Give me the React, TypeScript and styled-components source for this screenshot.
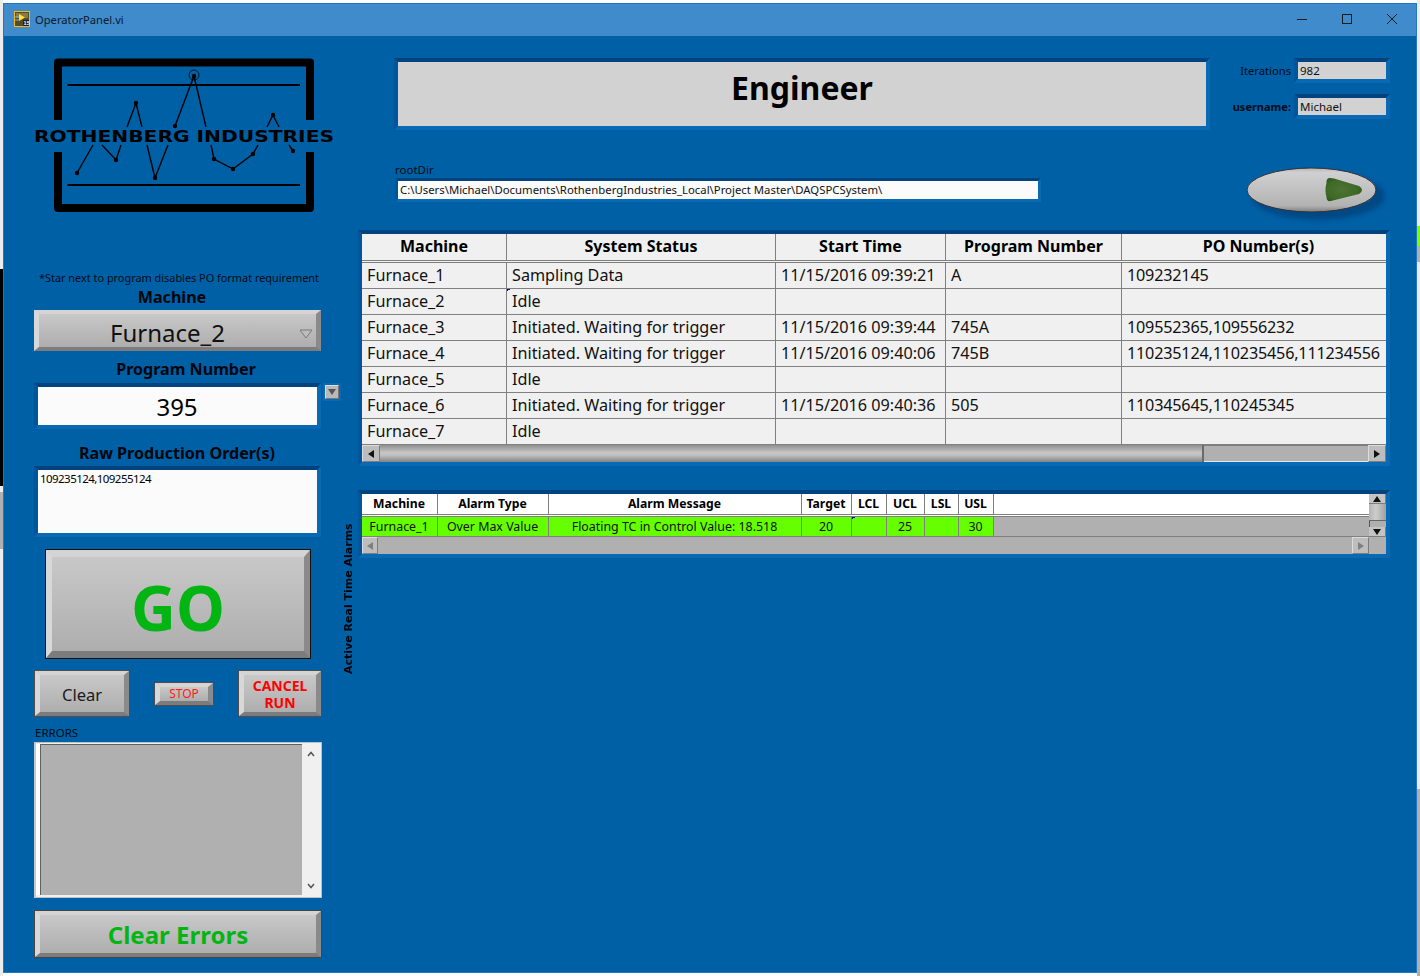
import React, { FunctionComponent } from "react";
import styled, { createGlobalStyle } from "styled-components";

const uiFont = `"Noto Sans", "Open Sans", "Liberation Sans", sans-serif`;

const GlobalStyle = createGlobalStyle`
  html, body {
    margin: 0;
    padding: 0;
    background: #ffffff;
  }
  body {
    font-family: ${uiFont};
    color: #000000;
  }
  * {
    box-sizing: border-box;
  }
`;

// the 3px slivers of other windows that show behind the panel
const Page = styled.div`
  width: 1420px;
  height: 976px;
  padding: 3px 0 0 3px;
  overflow: hidden;
  background:
    linear-gradient(#000000, #000000) 0 269px / 3px 217px no-repeat,
    linear-gradient(#b0b0b0, #b0b0b0) 0 492px / 3px 57px no-repeat,
    linear-gradient(#7cff00, #7cff00) 1417px 226px / 3px 20px no-repeat,
    linear-gradient(#b0b0b0, #b0b0b0) 1417px 246px / 3px 16px no-repeat,
    linear-gradient(#b0b0b0, #b0b0b0) 1417px 789px / 3px 187px no-repeat,
    linear-gradient(90deg, #ececec 3px, transparent 3px, transparent 1417px, #ececec 1417px) 0 0 / 1420px 976px no-repeat,
    #ffffff;
`;

const Window = styled.div`
  width: 1414px;
  height: 970px;
  display: flex;
  flex-direction: column;
  background: #0060a6;
  border: 1px solid #1f77c8;
`;

const TitleBar = styled.div`
  height: 32px;
  flex: none;
  display: flex;
  align-items: center;
  padding: 0 2px 2px 10px;
  background: #3f8bcb;
`;

const TitleText = styled.span`
  margin-left: 5px;
  font-size: 11.2px;
  color: #0a1a2c;
  flex: 1;
`;

const WinButton = styled.div`
  width: 45px;
  height: 30px;
  display: flex;
  align-items: center;
  justify-content: center;
`;

const Content = styled.div`
  flex: 1;
  display: flex;
  min-height: 0;
`;

const LeftColumn = styled.div`
  width: 338px;
  flex: none;
  padding-left: 30px;
  display: flex;
  flex-direction: column;
`;

const RightColumn = styled.div`
  flex: 1;
  display: flex;
  flex-direction: column;
  padding-top: 22px;
`;

const LogoSvg = styled.svg`
  display: block;
  margin: 19px 0 0 -4px;
  flex: none;
`;

const Notice = styled.div`
  margin-top: 56px;
  width: 290px;
  height: 14px;
  line-height: 14px;
  font-size: 10.9px;
  text-align: center;
  white-space: nowrap;
  color: #000c18;
`;

const FieldLabel = styled.div<{ $top: number; $wide: number }>`
  margin-top: ${props => props.$top}px;
  height: 18px;
  line-height: 18px;
  width: ${props => props.$wide}px;
  font-size: 16.1px;
  font-weight: 700;
  text-align: center;
  white-space: nowrap;
  color: #00060c;
`;

const Bevel = styled.button`
  display: flex;
  align-items: center;
  justify-content: center;
  padding: 0;
  font-family: ${uiFont};
  background: linear-gradient(#c8c8c8, #aeaeae);
  border-style: solid;
  border-width: 4px 5px 4px 5px;
  border-color: #d4d4d4 #8a8a8a #7c7c7c #d8d8d8;
`;

const Dropdown = styled(Bevel)`
  position: relative;
  margin-top: 4px;
  width: 287px;
  height: 41px;
  font-size: 24px;
  color: #111111;
  padding: 3px 20px 0 0;
`;

const DropArrow = styled.svg`
  position: absolute;
  right: 3px;
  top: 15px;
`;

const InputRow = styled.div`
  margin-top: 5px;
  display: flex;
  align-items: flex-start;
  gap: 2px;
`;

const Sunken = styled.div`
  border-style: solid;
  border-width: 4px;
  border-color: #00437f #0a69b3 #0a69b3 #00569c;
`;

const ProgramBox = styled(Sunken)`
  width: 287px;
  height: 46px;
  background: #fbfbfb;
  background-clip: padding-box;
  display: flex;
  align-items: center;
  justify-content: center;
  padding-right: 1px;
  font-size: 24px;
  color: #000000;
`;

const SpinFrame = styled.div`
  width: 18px;
  height: 18px;
  padding: 2px;
  background: #0a69b3;
`;

const SpinButton = styled.div`
  width: 14px;
  height: 14px;
  display: flex;
  align-items: center;
  justify-content: center;
  background: #b9b9b9;
  border: 1px solid #dddddd;
  border-right-color: #777777;
  border-bottom-color: #777777;
`;

const OrdersBox = styled(Sunken)`
  margin-top: 4px;
  width: 287px;
  height: 71px;
  padding: 1px 2px;
  background: #fbfbfb;
  background-clip: padding-box;
  font-size: 11.5px;
  letter-spacing: -0.55px;
  line-height: 15px;
`;

const GoButton = styled(Bevel)`
  margin: 13px 0 0 12px;
  width: 264px;
  height: 108px;
  padding-top: 5px;
  border-width: 7px 6px 7px 6px;
  box-shadow: 0 0 0 1px #111111;
  font-size: 62px;
  font-weight: 700;
  color: #02b512;
`;

const ActionRow = styled.div`
  margin-top: 12px;
  width: 288px;
  height: 47px;
  padding: 0 1px;
  display: flex;
  align-items: center;
  justify-content: space-between;
`;

const SmallButton = styled(Bevel)<{ $wide: number; $tall: number; $color: string; $size: number; $bold?: boolean }>`
  width: ${props => props.$wide}px;
  height: ${props => props.$tall}px;
  color: ${props => props.$color};
  font-size: ${props => props.$size}px;
  font-weight: ${props => (props.$bold ? 700 : 400)};
  line-height: 17px;
  text-align: center;
  box-shadow: 0 0 0 1px #4d4d4d;
`;

const ClearButton = styled(SmallButton)`
  padding-top: 2px;
`;

const ErrorsLabel = styled.div`
  margin-top: 9px;
  padding-left: 1px;
  height: 14px;
  line-height: 14px;
  font-size: 11.5px;
  color: #000c18;
`;

const ErrorsBox = styled.div`
  margin-top: 2px;
  width: 288px;
  height: 156px;
  display: flex;
  background: #f0f0f0;
  border: 1px solid #b8c4cc;
  border-left-width: 2px;
  border-left-color: #c4ccd2;
  padding: 1px 1px 2px 0;
`;

const ErrorsStrip = styled.div`
  width: 4px;
  flex: none;
  background: #ffffff;
`;

const ErrorsText = styled.div`
  flex: 1;
  background: #b0b0b0;
  border-top: 1px solid #606060;
  border-left: 1px solid #606060;
`;

const ErrorsScroll = styled.div`
  width: 18px;
  display: flex;
  flex-direction: column;
  justify-content: space-between;
  align-items: center;
  padding: 7px 0 6px;
`;

const ClearErrors = styled(Bevel)`
  margin: 13px 0 0 1px;
  width: 286px;
  height: 46px;
  padding-top: 1px;
  box-shadow: 0 0 0 1px #444444;
  font-size: 24px;
  font-weight: 700;
  color: #02b512;
`;

const HeaderRow = styled.div`
  height: 72px;
  display: flex;
  padding-left: 52px;
  flex: none;
`;

const RoleBanner = styled(Sunken)`
  width: 816px;
  height: 72px;
  padding-bottom: 14px;
  background: #d2d2d2;
  background-clip: padding-box;
  display: flex;
  align-items: center;
  justify-content: center;
  font-size: 32px;
  font-weight: 700;
`;

const StatusBlock = styled.div`
  width: 180px;
  padding-top: 2px;
  display: flex;
  flex-direction: column;
  gap: 15px;
`;

const StatusRow = styled.div`
  display: flex;
  align-items: center;
  justify-content: flex-end;
  gap: 3px;
  height: 21px;
`;

const StatusLabel = styled.span<{ $bold?: boolean }>`
  font-size: ${props => (props.$bold ? 11 : 11.2)}px;
  font-weight: ${props => (props.$bold ? 700 : 400)};
  color: #000c18;
`;

const StatusValue = styled(Sunken)`
  width: 96px;
  height: 25px;
  margin: -2px 0;
  padding-left: 2px;
  background: #d2d2d2;
  background-clip: padding-box;
  font-size: 11.5px;
  line-height: 17px;
  color: #111111;
`;

const PathRow = styled.div`
  height: 100px;
  flex: none;
  display: flex;
  padding-left: 53px;
`;

const PathBlock = styled.div`
  width: 646px;
  padding-top: 33px;
`;

const PathLabel = styled.div`
  height: 14px;
  margin-bottom: 1px;
  line-height: 14px;
  font-size: 11.5px;
  color: #000c18;
`;

const PathValue = styled.div`
  height: 24px;
  padding: 0 2px;
  border-style: solid;
  border-width: 3px;
  border-color: #00437f #0a69b3 #0a69b3 #00569c;
  background: #fbfbfb;
  background-clip: padding-box;
  font-size: 11.35px;
  line-height: 17px;
  white-space: nowrap;
  color: #111111;
`;

const GaugeSvg = styled.svg`
  display: block;
  margin: 36px 0 0 205px;
`;

const TableFrame = styled(Sunken)`
  margin-left: 16px;
  width: 1032px;
  height: 236px;
  background: #f0f0f0;
  background-clip: padding-box;
  display: flex;
  flex-direction: column;
`;

const mainColumns = "145px 269px 170px 176px 1fr";

const MainHead = styled.div`
  height: 29px;
  display: grid;
  grid-template-columns: ${mainColumns};
  border-bottom: 3px double #808080;
`;

const MainHeadCell = styled.div`
  border-right: 1px solid #808080;
  text-align: center;
  font-size: 16px;
  font-weight: 700;
  line-height: 25px;
  color: #000000;

  &:last-child {
    border-right: 0;
    padding-left: 9px;
  }
`;

const MainRow = styled.div`
  height: 26px;
  flex: none;
  display: grid;
  grid-template-columns: ${mainColumns};
  border-bottom: 1px solid #808080;
`;

const MainCell = styled.div`
  position: relative;
  padding-left: 5px;
  border-right: 1px solid #808080;
  font-size: 16.2px;
  line-height: 24px;
  white-space: nowrap;
  color: #111111;

  &:last-child {
    border-right: 0;
    padding-left: 5px;
    letter-spacing: -0.2px;
  }
`;

const CellMark = styled.i`
  position: absolute;
  left: 0;
  top: 0;
  width: 3px;
  height: 2px;
  border-top: 1px solid #0000d0;
  border-left: 1px solid #0000d0;
`;

const ScrollBar = styled.div`
  flex: 1;
  display: flex;
  background: #b0b0b0;
`;

const ArrowButton = styled.div<{ $w: number }>`
  width: ${props => props.$w}px;
  flex: none;
  display: flex;
  align-items: center;
  justify-content: center;
  background: #bdbdbd;
  border: 1px solid #dcdcdc;
  border-right-color: #7d7d7d;
  border-bottom-color: #7d7d7d;
`;

const ScrollThumb = styled.div`
  width: 824px;
  background: linear-gradient(#8f8f8f, #c6c6c6 45%, #c0c0c0 60%, #848484);
  border-right: 2px solid #6a6a6a;
`;

const ScrollTrack = styled.div`
  flex: 1;
  border-top: 1px solid #7d7d7d;
  border-bottom: 1px solid #e6e6e6;
`;

const AlarmSection = styled.div`
  margin-top: 24px;
  display: flex;
  align-items: flex-start;
`;

const AlarmTitle = styled.div`
  width: 14px;
  height: 150px;
  margin-top: 34px;
  margin-right: 2px;
  writing-mode: vertical-rl;
  transform: rotate(180deg);
  font-family: "DejaVu Sans", sans-serif;
  font-size: 11px;
  font-weight: 700;
  line-height: 14px;
  white-space: nowrap;
  text-align: left;
  color: #00060c;
`;

const AlarmFrame = styled(Sunken)`
  width: 1032px;
  height: 68px;
  background: #b0b0b0;
  background-clip: padding-box;
  display: flex;
  flex-direction: column;
`;

const AlarmBody = styled.div`
  height: 43px;
  flex: none;
  display: flex;
`;

const AlarmGrid = styled.div`
  flex: 1;
  display: flex;
  flex-direction: column;
`;

const alarmColumns = "76px 111px 253px 50px 35px 38px 34px 35px 1fr";

const AlarmHead = styled.div`
  height: 23px;
  flex: none;
  display: grid;
  grid-template-columns: ${alarmColumns};
  background: #ffffff;
  border-bottom: 3px double #808080;
`;

const AlarmHeadCell = styled.div`
  border-right: 1px solid #808080;
  padding-right: 1px;
  text-align: center;
  font-size: 12.2px;
  font-weight: 700;
  line-height: 19px;
  white-space: nowrap;
  color: #000000;

  &:last-child {
    border-right: 0;
  }
`;

const AlarmRow = styled.div`
  height: 20px;
  flex: none;
  display: grid;
  grid-template-columns: ${alarmColumns};
  border-bottom: 1px solid #808080;
`;

const AlarmCell = styled.div<{ $lit?: boolean }>`
  position: relative;
  border-right: 1px solid #808080;
  background: ${props => (props.$lit ? "#66ff00" : "#b0b0b0")};
  padding-right: 1px;
  text-align: center;
  font-size: 12.4px;
  line-height: 19px;
  white-space: nowrap;
  color: #111111;

  &:last-child {
    border-right: 0;
  }
`;

const VerticalBar = styled.div`
  width: 17px;
  flex: none;
  display: flex;
  flex-direction: column;
`;

const VerticalButton = styled.div`
  height: 10px;
  display: flex;
  align-items: center;
  justify-content: center;
  background: #c4c4c4;
  border-bottom: 1px solid #7d7d7d;
  border-right: 1px solid #7d7d7d;
`;

const VerticalThumb = styled.div`
  height: 17px;
  background: linear-gradient(90deg, #b4b4b4, #cdcdcd 40%, #a0a0a0);
  border-bottom: 1px solid #666666;
`;

const VerticalGap = styled.div`
  flex: 1;
  border-left: 1px solid #555555;
`;

const BottomBar = styled.div`
  flex: 1;
  display: flex;
  background: #b0b0b0;
  padding-right: 17px;
`;

const Spacer = styled.div`
  flex: 1;
`;

const Arrow: FunctionComponent<{ dir: "left" | "right" | "up" | "down"; color?: string }> = ({
  dir,
  color = "#111111",
}) => {
  const points = {
    left: "1,4 7,0 7,8",
    right: "7,4 1,0 1,8",
    up: "4,1 0,7 8,7",
    down: "4,7 0,1 8,1",
  }[dir];
  return (
    <svg width="8" height="8" viewBox="0 0 8 8">
      <polygon points={points} fill={color} />
    </svg>
  );
};

const Logo: FunctionComponent = () => {
  const traces = [
    "77,173 93,145",
    "102,145 116,160 121,145",
    "127,127 136,103 142,127",
    "147,145 155,178 168,145",
    "175,126 194,76 206,127",
    "211,145 214,159 233,169 253,154 258,145",
    "267,127 273,115 279,127",
    "289,145 293,151",
  ];
  const dots = [
    [77, 173],
    [116, 160],
    [136, 103],
    [155, 178],
    [175, 126],
    [194, 76],
    [214, 159],
    [233, 169],
    [253, 154],
    [273, 115],
    [293, 151],
  ];
  return (
    <LogoSvg width="310" height="160" viewBox="30 55 310 160">
      <path
        d="M58 120V62.5H310V120M58 152V208H310V152"
        fill="none"
        stroke="#000"
        strokeWidth="8"
        strokeLinejoin="round"
      />
      <path d="M67.5 85H300M67.5 185H300" stroke="#000" strokeWidth="2" />
      {traces.map(points => (
        <polyline key={points} points={points} fill="none" stroke="#000" strokeWidth="1.4" />
      ))}
      {dots.map(([x, y]) => (
        <circle key={`${x}-${y}`} cx={x} cy={y} r="2.2" fill="#000" />
      ))}
      <circle cx="194" cy="75" r="5" fill="none" stroke="#000" strokeWidth="0.8" />
      <text
        x="34"
        y="142"
        fontFamily="DejaVu Sans, sans-serif"
        fontWeight="700"
        fontSize="16.5"
        textLength="300"
        lengthAdjust="spacingAndGlyphs"
        fill="#000"
      >
        ROTHENBERG INDUSTRIES
      </text>
    </LogoSvg>
  );
};

const ViIcon: FunctionComponent = () => (
  <svg width="16" height="16" viewBox="0 0 16 16">
    <rect x="0.5" y="0.5" width="15" height="15" fill="#5a4a20" stroke="#f0b81e" />
    <rect x="2" y="2" width="12" height="5" fill="#8a7a40" />
    <polygon points="5,3 11,6.5 5,10" fill="#ffe24a" />
    <path d="M1 6H5M1 9H5" stroke="#7fb0e0" />
    <rect x="9" y="9" width="6" height="6" fill="#1c1c1c" />
    <text x="9.6" y="14.4" fontSize="5.5" fontWeight="700" fill="#ffffff" fontFamily="Liberation Sans, sans-serif">
      15
    </text>
  </svg>
);

const GaugeButton: FunctionComponent = () => (
  <GaugeSvg width="146" height="60" viewBox="0 0 146 60">
    <defs>
      <linearGradient id="oval" x1="0" y1="0" x2="0" y2="1">
        <stop offset="0" stopColor="#b4b4b4" />
        <stop offset="0.1" stopColor="#d0d0d0" />
        <stop offset="0.6" stopColor="#bdbdbd" />
        <stop offset="0.86" stopColor="#b2b2b2" />
        <stop offset="1" stopColor="#7e7e7e" />
      </linearGradient>
      <radialGradient id="arrowFill" cx="0.45" cy="0.5" r="0.6">
        <stop offset="0" stopColor="#4d7236" />
        <stop offset="0.7" stopColor="#3e6a26" />
        <stop offset="1" stopColor="#2c5a18" />
      </radialGradient>
      <filter id="soft" x="-10%" y="-20%" width="120%" height="140%">
        <feGaussianBlur stdDeviation="2.5" />
      </filter>
    </defs>
    <ellipse cx="72" cy="30" rx="67" ry="24" fill="#00457f" opacity="0.85" filter="url(#soft)" />
    <ellipse cx="65.5" cy="24" rx="64.5" ry="22" fill="url(#oval)" stroke="#333333" strokeWidth="1" />
    <path d="M84 12Q80 12 80.5 17Q78.5 24 80.5 31Q80.5 36 85 35L113 28Q119 24 113 20L88 12.5Z" fill="url(#arrowFill)" />
  </GaugeSvg>
);

const mainHeaders = ["Machine", "System Status", "Start Time", "Program Number", "PO Number(s)"];

const mainRows = [
  ["Furnace_1", "Sampling Data", "11/15/2016 09:39:21", "A", "109232145"],
  ["Furnace_2", "Idle", "", "", ""],
  ["Furnace_3", "Initiated. Waiting for trigger", "11/15/2016 09:39:44", "745A", "109552365,109556232"],
  ["Furnace_4", "Initiated. Waiting for trigger", "11/15/2016 09:40:06", "745B", "110235124,110235456,111234556"],
  ["Furnace_5", "Idle", "", "", ""],
  ["Furnace_6", "Initiated. Waiting for trigger", "11/15/2016 09:40:36", "505", "110345645,110245345"],
  ["Furnace_7", "Idle", "", "", ""],
];

const alarmHeaders = ["Machine", "Alarm Type", "Alarm Message", "Target", "LCL", "UCL", "LSL", "USL", ""];

const alarmValues = ["Furnace_1", "Over Max Value", "Floating TC in Control Value: 18.518", "20", "", "25", "", "30"];

const App: FunctionComponent = () => {
  return (
    <Page>
      <GlobalStyle />
      <Window>
        <TitleBar>
          <ViIcon />
          <TitleText>OperatorPanel.vi</TitleText>
          <WinButton>
            <svg width="12" height="12" viewBox="0 0 12 12">
              <path d="M1 6.5H11" stroke="#1a1a1a" />
            </svg>
          </WinButton>
          <WinButton>
            <svg width="12" height="12" viewBox="0 0 12 12">
              <rect x="1.5" y="1.5" width="9" height="9" fill="none" stroke="#1a1a1a" />
            </svg>
          </WinButton>
          <WinButton>
            <svg width="12" height="12" viewBox="0 0 12 12">
              <path d="M1 1L11 11M11 1L1 11" stroke="#1a1a1a" />
            </svg>
          </WinButton>
        </TitleBar>
        <Content>
          <LeftColumn>
            <Logo />
            <Notice>*Star next to program disables PO format requirement</Notice>
            <FieldLabel $top={3} $wide={276}>
              Machine
            </FieldLabel>
            <Dropdown>
              Furnace_2
              <DropArrow width="14" height="10" viewBox="0 0 14 10">
                <polygon points="1,1 13,1 7,9" fill="#bcbcbc" stroke="#7a7a7a" />
              </DropArrow>
            </Dropdown>
            <FieldLabel $top={9} $wide={304}>
              Program Number
            </FieldLabel>
            <InputRow>
              <ProgramBox>395</ProgramBox>
              <SpinFrame>
                <SpinButton>
                  <Arrow dir="down" color="#555555" />
                </SpinButton>
              </SpinFrame>
            </InputRow>
            <FieldLabel $top={15} $wide={286}>
              Raw Production Order(s)
            </FieldLabel>
            <OrdersBox>109235124,109255124</OrdersBox>
            <GoButton>GO</GoButton>
            <ActionRow>
              <ClearButton $wide={94} $tall={45} $color="#1a1a1a" $size={16.5}>
                Clear
              </ClearButton>
              <SmallButton $wide={58} $tall={22} $color="#ff1a1a" $size={12}>
                STOP
              </SmallButton>
              <SmallButton $wide={82} $tall={45} $color="#ff0000" $size={14} $bold>
                CANCEL
                <br />
                RUN
              </SmallButton>
            </ActionRow>
            <ErrorsLabel>ERRORS</ErrorsLabel>
            <ErrorsBox>
              <ErrorsStrip />
              <ErrorsText />
              <ErrorsScroll>
                <svg width="8" height="6" viewBox="0 0 8 6">
                  <path d="M1 5L4 1.5L7 5" fill="none" stroke="#555555" strokeWidth="1.5" />
                </svg>
                <svg width="8" height="6" viewBox="0 0 8 6">
                  <path d="M1 1L4 4.5L7 1" fill="none" stroke="#555555" strokeWidth="1.5" />
                </svg>
              </ErrorsScroll>
            </ErrorsBox>
            <ClearErrors>Clear Errors</ClearErrors>
          </LeftColumn>
          <RightColumn>
            <HeaderRow>
              <RoleBanner>Engineer</RoleBanner>
              <StatusBlock>
                <StatusRow>
                  <StatusLabel>Iterations</StatusLabel>
                  <StatusValue>982</StatusValue>
                </StatusRow>
                <StatusRow>
                  <StatusLabel $bold>username:</StatusLabel>
                  <StatusValue>Michael</StatusValue>
                </StatusRow>
              </StatusBlock>
            </HeaderRow>
            <PathRow>
              <PathBlock>
                <PathLabel>rootDir</PathLabel>
                <PathValue>C:\Users\Michael\Documents\RothenbergIndustries_Local\Project Master\DAQSPCSystem\</PathValue>
              </PathBlock>
              <GaugeButton />
            </PathRow>
            <TableFrame>
              <MainHead>
                {mainHeaders.map(title => (
                  <MainHeadCell key={title}>{title}</MainHeadCell>
                ))}
              </MainHead>
              {mainRows.map((row, rowIndex) => (
                <MainRow key={row[0]}>
                  {row.map((value, index) => (
                    <MainCell key={`${row[0]}-${index}`}>
                      {rowIndex === 1 && index === 1 ? <CellMark /> : null}
                      {value}
                    </MainCell>
                  ))}
                </MainRow>
              ))}
              <ScrollBar>
                <ArrowButton $w={18}>
                  <Arrow dir="left" />
                </ArrowButton>
                <ScrollThumb />
                <ScrollTrack />
                <ArrowButton $w={18}>
                  <Arrow dir="right" />
                </ArrowButton>
              </ScrollBar>
            </TableFrame>
            <AlarmSection>
              <AlarmTitle>Active Real Time Alarms</AlarmTitle>
              <AlarmFrame>
                <AlarmBody>
                  <AlarmGrid>
                    <AlarmHead>
                      {alarmHeaders.map((title, index) => (
                        <AlarmHeadCell key={`${title}-${index}`}>{title}</AlarmHeadCell>
                      ))}
                    </AlarmHead>
                    <AlarmRow>
                      {alarmValues.map((value, index) => (
                        <AlarmCell key={index} $lit>
                          {index === 4 ? <CellMark /> : null}
                          {value}
                        </AlarmCell>
                      ))}
                      <AlarmCell />
                    </AlarmRow>
                  </AlarmGrid>
                  <VerticalBar>
                    <VerticalButton>
                      <Arrow dir="up" />
                    </VerticalButton>
                    <VerticalThumb />
                    <VerticalGap />
                    <VerticalButton>
                      <Arrow dir="down" />
                    </VerticalButton>
                  </VerticalBar>
                </AlarmBody>
                <BottomBar>
                  <ArrowButton $w={16}>
                    <Arrow dir="left" color="#808080" />
                  </ArrowButton>
                  <Spacer />
                  <ArrowButton $w={17}>
                    <Arrow dir="right" color="#808080" />
                  </ArrowButton>
                </BottomBar>
              </AlarmFrame>
            </AlarmSection>
          </RightColumn>
        </Content>
      </Window>
    </Page>
  );
};

export default App;
